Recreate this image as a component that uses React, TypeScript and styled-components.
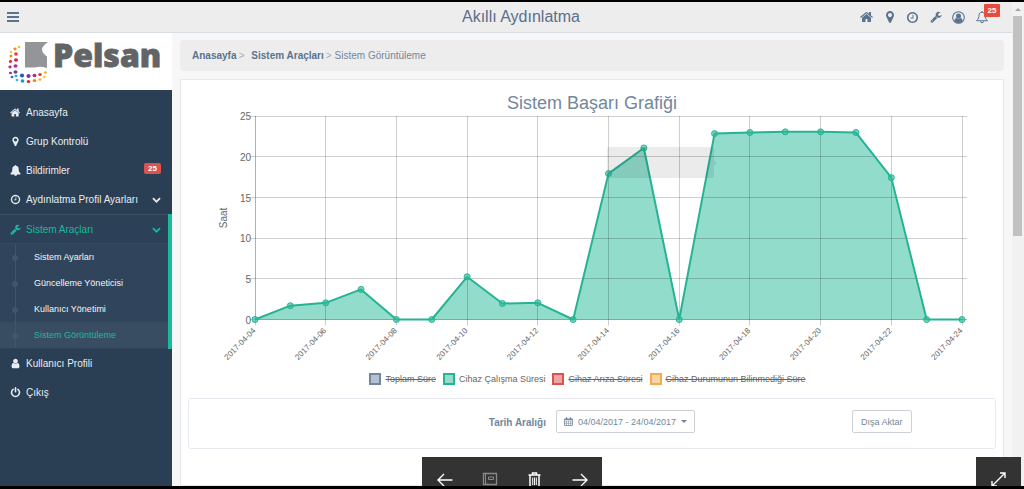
import React from "react";
import styled, { createGlobalStyle, css } from "styled-components";

const GlobalStyle = createGlobalStyle`
  *, *::before, *::after { box-sizing: border-box; }
  body { margin: 0; font-family: "Liberation Sans", Arial, sans-serif; font-size: 10px; color: #73879c; background: #f7f7f7; }
  button { font: inherit; color: inherit; cursor: pointer; }
  ul, ol { list-style: none; margin: 0; padding: 0; }
  a { color: inherit; text-decoration: none; }
  h1, h2 { margin: 0; font-weight: 400; }
`;

/* ---------- icons ---------- */

const solidPaths = {
  home: "M1408 992v480q0 26-19 45t-45 19h-384v-384h-256v384h-384q-26 0-45-19t-19-45v-480q0-1 .5-3t.5-3l575-474 575 474q1 2 1 6zm223-69l-62 74q-8 9-21 11h-3q-13 0-21-7l-692-577-692 577q-12 8-24 7-13-2-21-11l-62-74q-8-10-7-23.5t11-21.5l719-599q32-26 76-26t76 26l244 204v-195q0-14 9-23t23-9h192q14 0 23 9t9 23v408l219 182q10 8 11 21.5t-7 23.5z",
  marker: "M1152 640q0-106-75-181t-181-75-181 75-75 181 75 181 181 75 181-75 75-181zm256 0q0 109-33 179l-364 774q-16 33-47.5 52t-67.5 19-67.5-19-46.5-52l-365-774q-33-70-33-179 0-212 150-362t362-150 362 150 150 362z",
  clock: "M1024 544v448q0 14-9 23t-23 9h-320q-14 0-23-9t-9-23v-64q0-14 9-23t23-9h224v-352q0-14 9-23t23-9h64q14 0 23 9t9 23zm416 352q0-148-73-273t-198-198-273-73-273 73-198 198-73 273 73 273 198 198 273 73 273-73 198-198 73-273zm224 0q0 209-103 385.5t-279.5 279.5-385.5 103-385.5-103-279.5-279.5-103-385.5 103-385.5 279.5-279.5 385.5-103 385.5 103 279.5 279.5 103 385.5z",
  wrench: "M448 1472q0-26-19-45t-45-19-45 19-19 45 19 45 45 19 45-19 19-45zm644-420l-682 682q-37 37-90 37-52 0-91-37l-106-108q-38-36-38-90 0-53 38-91l681-681q39 98 114.5 173.5t173.5 114.5zm634-435q0 39-23 106-47 134-164.5 217.5t-258.5 83.5q-185 0-316.5-131.5t-131.5-316.5 131.5-316.5 316.5-131.5q58 0 121.5 16.5t107.5 46.5q16 11 16 28t-16 28l-293 169v224l193 107q5-3 79-48.5t135.5-81 70.5-35.5q15 0 23.5 10t8.5 25z",
  chevron: "M1683 808l-742 741q-19 19-45 19t-45-19l-742-741q-19-19-19-45.5t19-45.5l166-165q19-19 45-19t45 19l531 531 531-531q19-19 45-19t45 19l166 165q19 19 19 45.5t-19 45.5z",
  bell: "M912 1696q0-16-16-16-59 0-101.5-42.5t-42.5-101.5q0-16-16-16t-16 16q0 73 51.5 124.5t124.5 51.5q16 0 16-16zm816-288q0 52-38 90t-90 38h-448q0 106-75 181t-181 75-181-75-75-181h-448q-52 0-90-38t-38-90q50-42 91-88t85-119.5 74.5-158.5 50-206 19.5-260q0-152 117-282.5t307-158.5q-8-19-8-39 0-40 28-68t68-28 68 28 28 68q0 20-8 39 190 28 307 158.5t117 282.5q0 139 19.5 260t50 206 74.5 158.5 85 119.5 91 88z",
  user: "M1536 1399q0 109-62.5 187t-150.5 78h-854q-88 0-150.5-78t-62.5-187q0-85 8.5-160.5t31.5-152 58.5-131 94-89 134.5-34.5q131 128 313 128t313-128q76 0 134.5 34.5t94 89 58.5 131 31.5 152 8.5 160.5zm-256-887q0 159-112.5 271.5t-271.5 112.5-271.5-112.5-112.5-271.5 112.5-271.5 271.5-112.5 271.5 112.5 112.5 271.5z",
  power: "M1664 896q0 156-61 298t-164 245-245 164-298 61-298-61-245-164-164-245-61-298q0-182 80.5-343t226.5-270q43-32 95.5-25t83.5 50q32 42 24.5 94.5t-49.5 84.5q-98 74-151.5 181t-53.5 228q0 104 40.5 198.5t109.5 163.5 163.5 109.5 198.5 40.5 198.5-40.5 163.5-109.5 109.5-163.5 40.5-198.5q0-121-53.5-228t-151.5-181q-42-32-49.5-84.5t24.5-94.5q31-43 84-50t95 25q146 109 226.5 270t80.5 343zm-640-768v640q0 52-38 90t-90 38-90-38-38-90v-640q0-52 38-90t90-38 90 38 38 90z",
};
type IconName = keyof typeof solidPaths;

const Icon = ({ name, size = 11 }: { name: IconName; size?: number }) => (
  <svg width={size} height={size} viewBox="0 0 1792 1792" fill="currentColor" aria-hidden="true">
    <path d={solidPaths[name]} />
  </svg>
);

const UserCircle = () => (
  <svg width="13" height="13" viewBox="0 0 26 26" fill="none" stroke="currentColor" aria-hidden="true">
    <circle cx="13" cy="13" r="11.6" strokeWidth="2.2" />
    <circle cx="13" cy="10" r="5" fill="currentColor" stroke="none" />
    <path d="M4.5 20C5 16.5 7 14.5 9.3 14.2q3.7 2.6 7.4 0C19 14.500 21 16.500 21.500 20Q18 24.500 13 24.500T4.500 20z" fill="currentColor" stroke="none" />
  </svg>
);

const BellOutline = () => (
  <svg width="14" height="14" viewBox="0 0 28 28" fill="none" stroke="currentColor" strokeWidth="2" aria-hidden="true">
    <path d="M14 2v2.500M3 21.500C7 18 8 14 8 10.500 8 7 10.500 4.500 14 4.500s6 2.500 6 6c0 3.500 1 7.500 5 11z" strokeLinejoin="round" />
    <path d="M11 22.500a3 3 0 0 0 6 0" />
  </svg>
);

const Calendar = () => (
  <svg width="9" height="9" viewBox="0 0 18 18" fill="none" stroke="currentColor" aria-hidden="true">
    <path d="M1 4h16v13H1z" strokeWidth="1.600" />
    <path d="M1 5h16" strokeWidth="2.500" />
    <path d="M5 .5v4M13 .5v4" strokeWidth="2.600" />
    <path d="M1 9.500h16M1 13.200h16M5 7v10M9 7v10M13 7v10" strokeWidth="1" />
  </svg>
);

/* ---------- frame ---------- */

const Frame = styled.div`
  position: relative;
  display: flex;
  height: 100vh;
  overflow: hidden;
  border-top: 2px solid #000;
  border-bottom: 3px solid #000;
`;

const Page = styled.div`
  flex: 1;
  min-width: 0;
  display: flex;
  flex-direction: column;
`;

const ScrollTrack = styled.div`
  flex: none;
  width: 12px;
  padding: 6px 2px 0 1px;
  background: #f1f1f1;
  display: flex;
  flex-direction: column;
  align-items: center;
  gap: 5px;
`;

const ScrollThumb = styled.div`
  width: 100%;
  height: 46%;
  background: #c1c1c1;
`;

const Header = styled.header`
  flex: none;
  display: grid;
  grid-template-columns: 30px 1fr auto 1fr;
  align-items: center;
  height: 31px;
  background: #ededed;
  border-bottom: 1px solid #d9dee4;
`;

const MenuButton = styled.button`
  display: flex;
  padding: 0 0 0 7px;
  border: 0;
  background: none;
  color: #5a738e;
`;

const AppTitle = styled.h1`
  grid-column: 3;
  font-size: 16px;
  line-height: 20px;
  color: #5a6f8c;
`;

const HeaderNav = styled.nav`
  grid-column: 4;
  display: flex;
  justify-content: flex-end;
  gap: 8px;
  padding-right: 23px;
  color: #5a738e;
`;

const HeaderLink = styled.a`
  position: relative;
  display: flex;
  justify-content: center;
  align-items: center;
  width: 15px;
  height: 15px;
`;

const HeaderBadge = styled.span`
  position: absolute;
  left: 10px;
  bottom: 8px;
  width: 16px;
  border-radius: 1px;
  background: #e74c3c;
  color: #fff;
  font-size: 8px;
  font-weight: 700;
  line-height: 13px;
  text-align: center;
`;

const Body = styled.div`
  flex: 1;
  min-height: 0;
  display: flex;
`;

/* ---------- sidebar ---------- */

const Sidebar = styled.aside`
  flex: none;
  width: 172px;
  background: #2a3f54;
`;

const Logo = styled.a`
  display: block;
  height: 57px;
  margin-bottom: 8px;
  background: #fff;
`;

const MenuGroup = styled.li<{ $active?: boolean }>`
  ${(p) =>
    p.$active &&
    css`
      border-right: 4px solid #1abb9c;
      background: #30455b;
      padding-bottom: 1px;
    `}
`;

const MenuLink = styled.a<{ $active?: boolean }>`
  display: flex;
  align-items: center;
  gap: 5px;
  height: ${(p) => (p.$active ? 30 : 29)}px;
  padding: 0 ${(p) => (p.$active ? 7 : 11)}px 0 10px;
  color: ${(p) => (p.$active ? "#1abb9c" : "#e7edf2")};
  ${(p) =>
    p.$active &&
    css`
      border-top: 1px solid #3f5266;
      border-bottom: 1px solid #374b60;
      background: #2c4157;
    `}
`;

const MenuText = styled.span`
  flex: 1;
  white-space: nowrap;
`;

const MenuBadge = styled.span`
  width: 17px;
  margin-bottom: 4px;
  border-radius: 2px;
  background: #d9534f;
  color: #fff;
  font-size: 8px;
  font-weight: 700;
  line-height: 11px;
  text-align: center;
`;

const SubLink = styled.a<{ $active?: boolean }>`
  position: relative;
  display: flex;
  align-items: center;
  height: 26px;
  padding-left: 34px;
  font-size: 9px;
  color: ${(p) => (p.$active ? "#1abb9c" : "#f2f5f7")};
  background: ${(p) => (p.$active ? "#394d62" : "transparent")};

  &::before {
    content: "";
    position: absolute;
    left: 15px;
    top: 0;
    bottom: 0;
    width: 1px;
    background: #425668;
  }
  &::after {
    content: "";
    position: absolute;
    left: 12px;
    top: 11px;
    width: 6px;
    height: 6px;
    border-radius: 50%;
    background: #425668;
  }
`;

/* ---------- content ---------- */

const Content = styled.main`
  flex: 1;
  min-width: 0;
  display: flex;
  flex-direction: column;
  gap: 8px;
  padding: 7px 8px 0;
  background: #f7f7f7;
`;

const Breadcrumb = styled.nav`
  flex: none;
  display: flex;
  align-items: center;
  height: 31px;
  padding: 0 12px;
  border-radius: 4px;
  background: #ededed;
`;

const Crumb = styled.a`
  font-weight: 700;
  color: #5a738e;
`;

const Separator = styled.span<{ $wide?: boolean }>`
  margin: 0 ${(p) => (p.$wide ? 7 : 3)}px 0 2px;
  color: #a5adb8;
`;

const Card = styled.section`
  flex: 1;
  min-height: 0;
  padding: 13px 7px 0;
  border: 1px solid #e6e9ed;
  background: #fff;
`;

const CardTitle = styled.h2`
  font-size: 18px;
  line-height: 21px;
  text-align: center;
  color: #73879c;
`;

const ChartSvg = styled.svg`
  display: block;
  width: 100%;
  height: auto;
  overflow: visible;
  font-family: "Liberation Sans", Arial, sans-serif;
  fill: #666;
`;

const Legend = styled.div`
  display: flex;
  justify-content: center;
  gap: 7px;
  margin-bottom: 13px;
  padding-right: 9px;
`;

const LegendButton = styled.button<{ $off?: boolean }>`
  display: flex;
  align-items: center;
  gap: 4px;
  height: 12px;
  padding: 0;
  border: 0;
  background: none;
  color: #666;
  font-size: 9px;
  white-space: nowrap;
  text-decoration: ${(p) => (p.$off ? "line-through" : "none")};
`;

const Swatch = styled.span<{ $line: string; $fill: string }>`
  width: 12px;
  height: 12px;
  border: 2px solid ${(p) => p.$line};
  background: ${(p) => p.$fill};
`;

const FilterPanel = styled.form`
  display: grid;
  grid-template-columns: 357fr 286fr 143fr;
  column-gap: 10px;
  height: 51px;
  padding-top: 11px;
  border: 1px solid #e6e9ed;
  border-radius: 3px;
`;

const FilterLabel = styled.label`
  padding-top: 2px;
  font-weight: 700;
  line-height: 22px;
  text-align: right;
`;

const OutlineButton = styled.button`
  justify-self: start;
  display: flex;
  align-items: center;
  gap: 5px;
  height: 23px;
  padding: 0 7px;
  border: 1px solid #ccd0d7;
  border-radius: 2px;
  background: #fff;
  font-size: 9px;
  white-space: nowrap;
`;

const ExportButton = styled(OutlineButton)`
  font-size: 9px;
  padding: 0 8px;
`;

const Caret = styled.span`
  border: 3px solid transparent;
  border-top-color: currentColor;
  border-bottom: 0;
`;

/* ---------- viewer controls over the page ---------- */

const ViewerBar = styled.div`
  position: absolute;
  left: 50%;
  bottom: -16px;
  display: flex;
  transform: translateX(-50%);
  background: #333;
`;

const ExpandCorner = styled.div`
  position: absolute;
  right: 3px;
  bottom: -16px;
  background: #333;
`;

const ViewerButton = styled.button<{ $dim?: boolean }>`
  display: flex;
  align-items: center;
  justify-content: center;
  width: 45px;
  height: 45px;
  padding: 0;
  border: 0;
  background: none;
  color: ${(p) => (p.$dim ? "#8a8a8a" : "#fff")};
`;

/* ---------- chart ---------- */

const hours = [0, 1.7, 2.05, 3.7, 0, 0, 5.25, 1.97, 2.05, 0, 17.95, 21.1, 0, 22.87, 23, 23.08, 23.08, 23, 17.45, 0, 0];
const LEFT = 67;
const STEP = 35.35;
const BASE = 205.5;
const px = (i: number) => LEFT + i * STEP;
const py = (v: number) => BASE - v * 8.13;
const linePoints = hours.map((v, i) => `${px(i)},${py(v)}`).join(" ");

const Chart = () => (
  <ChartSvg viewBox="0 0 808 259" role="img" aria-label="Sistem Başarı Grafiği">
    <polygon points={`${px(0)},${BASE} ${linePoints} ${px(20)},${BASE}`} fill="#26b99a" fillOpacity="0.5" />
    <g stroke="#000" strokeOpacity="0.19">
      {[0, 5, 10, 15, 20, 25].map((v) => (
        <line key={v} x1={LEFT - 5} x2={px(20) + 5} y1={Math.floor(py(v)) + 0.5} y2={Math.floor(py(v)) + 0.5} />
      ))}
      {hours.map((_, i) =>
        i % 2 ? null : (
          <line key={i} x1={Math.floor(px(i)) + 0.5} x2={Math.floor(px(i)) + 0.5} y1="2" y2={BASE + 6} />
        )
      )}
    </g>
    <line x1={LEFT + 0.5} x2={LEFT + 0.5} y1="2" y2={BASE} stroke="#000" strokeOpacity="0.15" />
    <line x1={LEFT} x2={px(20) + 5} y1={BASE} y2={BASE} stroke="#000" strokeOpacity="0.15" />
    <polyline points={linePoints} fill="none" stroke="#26b394" strokeWidth="2" strokeLinejoin="round" />
    {hours.map((v, i) => (
      <circle key={i} cx={px(i)} cy={py(v)} r="3" fill="#26b99a" fillOpacity="0.6" stroke="#26b394" />
    ))}
    <path d="M421 33h103q2 0 2 2v11l3 3-3 3v10q0 2-2 2H421q-2 0-2-2V35q0-2 2-2z" fill="#000" fillOpacity="0.08" />
    <g fontSize="10" textAnchor="end">
      {[0, 5, 10, 15, 20, 25].map((v) => (
        <text key={v} x="63" y={py(v) + 4}>{v}</text>
      ))}
    </g>
    <text transform="translate(39 104) rotate(-90)" fontSize="10" textAnchor="middle">Saat</text>
    <g fontSize="8" textAnchor="end">
      {hours.map((_, i) =>
        i % 2 ? null : (
          <text key={i} transform={`translate(${px(i) + 1} 217) rotate(-46)`}>
            {`2017-04-${String(i + 4).padStart(2, "0")}`}
          </text>
        )
      )}
    </g>
  </ChartSvg>
);

const series = [
  { name: "Toplam Süre", line: "#73879c", fill: "#b3c1d6", off: true },
  { name: "Cihaz Çalışma Süresi", line: "#26b394", fill: "#93dccc", off: false },
  { name: "Cihaz Arıza Süresi", line: "#d9534f", fill: "#eea5a3", off: true },
  { name: "Cihaz Durumunun Bilinmediği Süre", line: "#f0ad4e", fill: "#f9d69f", off: true },
];

const logoDots: [number, number, number, string][] = [
  [19, 14, 1.3, "#f0c419"], [15, 16, 1.6, "#f08a24"], [11, 19, 1.3, "#f6c945"],
  [16, 21, 1.9, "#e5432e"], [11, 23, 1.5, "#ef7d22"], [16, 27, 2, "#d81f4f"], [10.5, 28.5, 1.6, "#e02a3c"],
  [15.5, 33, 2, "#a8308f"], [10, 34, 1.6, "#c22a7a"], [15.5, 39, 2, "#5b4aa0"], [10.5, 40, 1.5, "#7c3f98"],
  [12, 44, 1.5, "#3c6fb6"], [16, 43, 1.5, "#2fa8df"], [22, 42.5, 2.1, "#1b62ad"], [28.5, 43, 2.1, "#7a3c96"],
  [34.5, 42.5, 2, "#b52c84"], [40, 41.5, 1.8, "#e2382f"], [45.5, 39.5, 1.4, "#f3b11f"],
  [17, 47, 1.4, "#37b5e5"], [22.5, 48, 1.9, "#2b8fd0"], [28.5, 48.5, 1.8, "#e0262f"], [34.5, 47.5, 1.8, "#ef8222"],
  [40, 46.5, 1.5, "#f3b11f"], [44, 44, 1.3, "#f6cf3a"],
];

const subItems = ["Sistem Ayarları", "Güncelleme Yöneticisi", "Kullanıcı Yönetimi", "Sistem Görüntüleme"];

export default function App() {
  return (
    <Frame>
      <GlobalStyle />
      <Page>
        <Header>
          <MenuButton aria-label="Menü">
            <svg width="12" height="11" viewBox="0 0 12 11" fill="currentColor" aria-hidden="true">
              <path d="M0 0h12v2H0zM0 4h12v2H0zM0 8h12v2H0z" />
            </svg>
          </MenuButton>
          <AppTitle>Akıllı Aydınlatma</AppTitle>
          <HeaderNav>
            <HeaderLink href="#" aria-label="Anasayfa"><Icon name="home" size={14} /></HeaderLink>
            <HeaderLink href="#" aria-label="Grup Kontrolü"><Icon name="marker" size={14} /></HeaderLink>
            <HeaderLink href="#" aria-label="Profil Ayarları"><Icon name="clock" size={13} /></HeaderLink>
            <HeaderLink href="#" aria-label="Sistem Araçları"><Icon name="wrench" size={12} /></HeaderLink>
            <HeaderLink href="#" aria-label="Kullanıcı Profili"><UserCircle /></HeaderLink>
            <HeaderLink href="#" aria-label="Bildirimler">
              <BellOutline />
              <HeaderBadge>25</HeaderBadge>
            </HeaderLink>
          </HeaderNav>
        </Header>
        <Body>
          <Sidebar>
            <Logo href="#" aria-label="Pelsan">
              <svg width="172" height="57" viewBox="0 0 172 57" aria-hidden="true">
                {logoDots.map(([x, y, r, c], i) => (
                  <ellipse key={i} cx={x} cy={y} rx={r} ry={r * 0.9} fill={c} />
                ))}
                <path d="M25 9h23q-6 4-6 7.500t5 7V35Q40 33 35 34.500H25z" fill="#939598" />
                <text x="53" y="34" fill="#636466" stroke="#636466" strokeWidth="0.8" fontFamily='"Open Sans", "Noto Sans", sans-serif' fontWeight="800" fontSize="32">Pelsan</text>
              </svg>
            </Logo>
            <nav>
              <ul>
                <MenuGroup><MenuLink href="#"><Icon name="home" /><MenuText>Anasayfa</MenuText></MenuLink></MenuGroup>
                <MenuGroup><MenuLink href="#"><Icon name="marker" /><MenuText>Grup Kontrolü</MenuText></MenuLink></MenuGroup>
                <MenuGroup>
                  <MenuLink href="#"><Icon name="bell" /><MenuText>Bildirimler</MenuText><MenuBadge>25</MenuBadge></MenuLink>
                </MenuGroup>
                <MenuGroup>
                  <MenuLink href="#"><Icon name="clock" /><MenuText>Aydınlatma Profil Ayarları</MenuText><Icon name="chevron" size={9} /></MenuLink>
                </MenuGroup>
                <MenuGroup $active>
                  <MenuLink href="#" $active><Icon name="wrench" /><MenuText>Sistem Araçları</MenuText><Icon name="chevron" size={9} /></MenuLink>
                  <ul>
                    {subItems.map((label, i) => (
                      <li key={label}><SubLink href="#" $active={i === 3}>{label}</SubLink></li>
                    ))}
                  </ul>
                </MenuGroup>
                <MenuGroup><MenuLink href="#"><Icon name="user" /><MenuText>Kullanıcı Profili</MenuText></MenuLink></MenuGroup>
                <MenuGroup><MenuLink href="#"><Icon name="power" /><MenuText>Çıkış</MenuText></MenuLink></MenuGroup>
              </ul>
            </nav>
          </Sidebar>
          <Content>
            <Breadcrumb>
              <Crumb href="#">Anasayfa</Crumb>
              <Separator $wide>&gt;</Separator>
              <Crumb href="#">Sistem Araçları</Crumb>
              <Separator>&gt;</Separator>
              <span>Sistem Görüntüleme</span>
            </Breadcrumb>
            <Card>
              <CardTitle>Sistem Başarı Grafiği</CardTitle>
              <Chart />
              <Legend>
                {series.map((s) => (
                  <LegendButton key={s.name} type="button" $off={s.off}>
                    <Swatch $line={s.line} $fill={s.fill} />
                    {s.name}
                  </LegendButton>
                ))}
              </Legend>
              <FilterPanel>
                <FilterLabel htmlFor="range">Tarih Aralığı</FilterLabel>
                <OutlineButton id="range" type="button">
                  <Calendar />
                  04/04/2017 - 24/04/2017
                  <Caret />
                </OutlineButton>
                <ExportButton type="button">Dışa Aktar</ExportButton>
              </FilterPanel>
            </Card>
          </Content>
        </Body>
      </Page>
      <ScrollTrack>
        <svg width="6" height="3" viewBox="0 0 6 3" aria-hidden="true"><path d="M3 0l3 3H0z" fill="#a3a3a3" /></svg>
        <ScrollThumb />
      </ScrollTrack>
      <ViewerBar>
        <ViewerButton aria-label="Geri">
          <svg width="16" height="14" viewBox="0 0 16 14" fill="none" stroke="currentColor" strokeWidth="1.400" aria-hidden="true">
            <path d="M15.500 7H1M7 1L1 7l6 6" />
          </svg>
        </ViewerButton>
        <ViewerButton $dim aria-label="Not">
          <svg width="16" height="15" viewBox="0 0 16 15" fill="none" stroke="currentColor" aria-hidden="true">
            <path d="M4 12.500H1.500v-11h13v11H7" strokeWidth="1.300" />
            <path d="M3.500 2v10M6.500 5h5v2.500h-5z" />
            <path d="M2.500 12.500h4M5 10.500l2 2-2 2" />
          </svg>
        </ViewerButton>
        <ViewerButton aria-label="Sil">
          <svg width="13" height="16" viewBox="0 0 13 16" fill="none" stroke="currentColor" strokeWidth="1.500" aria-hidden="true">
            <path d="M.5 3h12M4.500 3V1h4v2M2 3v12h9V3" />
            <path d="M4.700 5.500v7.500M6.500 5.500v7.500M8.300 5.500v7.500" strokeWidth="1" />
          </svg>
        </ViewerButton>
        <ViewerButton aria-label="İleri">
          <svg width="16" height="14" viewBox="0 0 16 14" fill="none" stroke="currentColor" strokeWidth="1.400" aria-hidden="true">
            <path d="M.5 7H15M9 1l6 6-6 6" />
          </svg>
        </ViewerButton>
      </ViewerBar>
      <ExpandCorner>
        <ViewerButton aria-label="Tam ekran">
          <svg width="15" height="15" viewBox="0 0 15 15" fill="none" stroke="currentColor" strokeWidth="1.400" aria-hidden="true">
            <path d="M1 14L14 1M9 1h5v5M1 9v5h5" />
          </svg>
        </ViewerButton>
      </ExpandCorner>
    </Frame>
  );
}
